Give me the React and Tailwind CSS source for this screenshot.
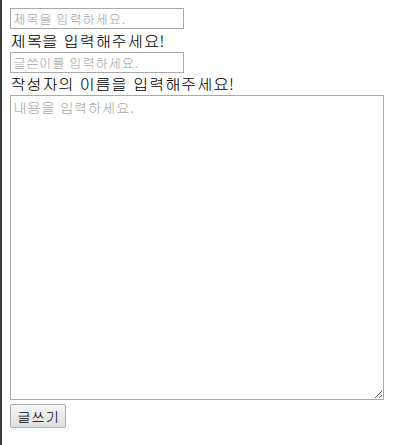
import React from "react";

const font = "font-['Gulim','Noto_Sans_CJK_KR',sans-serif]";

export default function App() {
  return (
    <div className={`min-h-[445px] w-[409px] bg-white border-l-2 border-[#3c3c3c] pl-2 pt-2 ${font}`}>
      <form className="flex flex-col items-start">
        {/* 제목 */}
        <input
          type="text"
          placeholder="제목을 입력하세요."
          className="w-[174px] h-[21px] border border-[#a9a9a9] px-[2px] text-[13px] placeholder:text-[#a9a9a9] outline-none"
        />
        <p className="text-[16px] leading-[23px] text-black">제목을 입력해주세요!</p>

        {/* 작성자 */}
        <input
          type="text"
          placeholder="글쓴이를 입력하세요."
          className="w-[174px] h-[21px] border border-[#a9a9a9] px-[2px] text-[13px] placeholder:text-[#a9a9a9] outline-none"
        />
        <p className="text-[16px] leading-[22px] text-black">작성자의 이름을 입력해주세요!</p>

        {/* 내용 */}
        <textarea
          placeholder="내용을 입력하세요."
          className="w-[374px] h-[305px] border border-[#a9a9a9] px-[2px] py-[1px] text-[14px] placeholder:text-[#a9a9a9] outline-none resize"
        />

        <button
          type="button"
          className="mt-[4px] w-[56px] h-[24px] border border-[#adadad] rounded-[2px] bg-gradient-to-b from-[#f6f6f6] to-[#dedede] text-[14px] text-black"
        >
          글쓰기
        </button>
      </form>
    </div>
  );
}
